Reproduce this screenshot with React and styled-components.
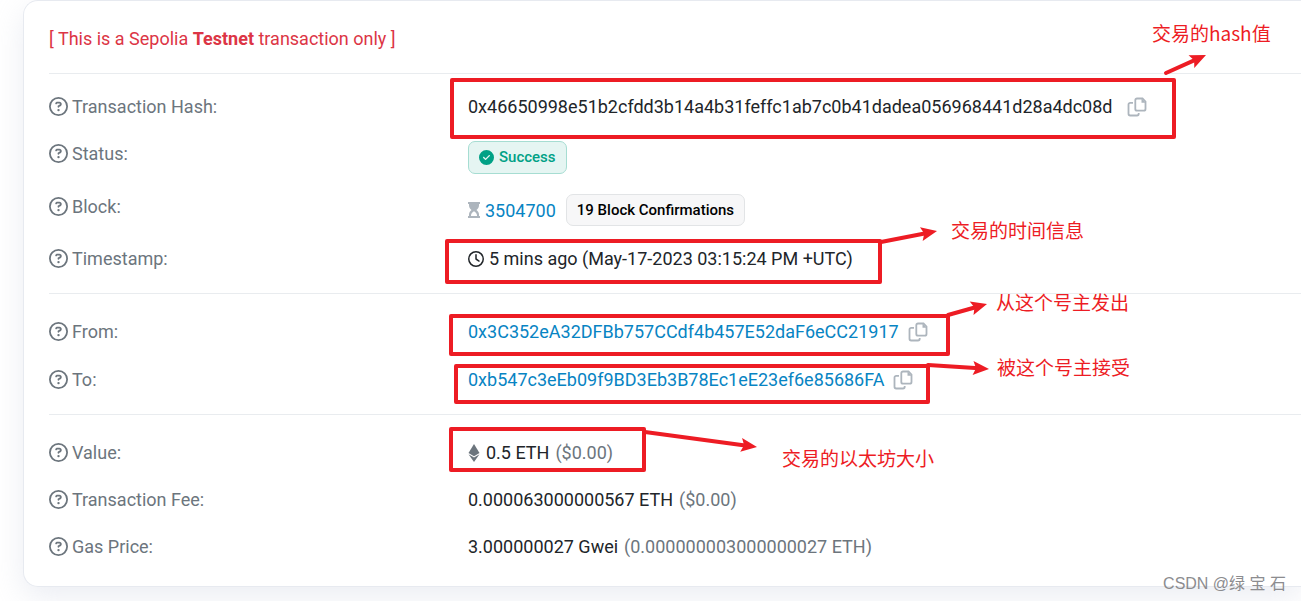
import React from 'react';
import styled, { createGlobalStyle } from 'styled-components';
import { FaRegCircleQuestion, FaRegClock, FaCircleCheck } from 'react-icons/fa6';

const GlobalStyle = createGlobalStyle`
  * {
    box-sizing: border-box;
  }

  body {
    margin: 0;
    background-color: #fff;
    color: #212529;
    font-family: Roboto, "Noto Sans CJK SC", sans-serif;
    font-size: 18px;
    line-height: 25px;
  }
`;

const Page = styled.main`
  position: relative;
  padding-left: 23px;
  padding-bottom: 14px;
  overflow: hidden;
`;

const Card = styled.section`
  padding: 25px 0 25px 25px;
  background-color: #fff;
  border: 1px solid #e7eaf0;
  border-right: 0;
  border-radius: 15px 0 0 15px;
  box-shadow: 0 10px 30px rgba(189, 197, 216, 0.3);
`;

const Notice = styled.p`
  margin: 0;
  padding-bottom: 22px;
  color: #dc3545;
`;

const Group = styled.dl`
  display: flex;
  flex-direction: column;
  gap: ${props => props.$gap || 20}px;
  margin: 0;
  padding: ${props => props.$first ? '20px' : '25px'} 0 ${props => props.$last ? '0' : '20px'};
  border-top: 1px solid #e9ecef;
`;

const Row = styled.div`
  display: grid;
  grid-template-columns: 419px minmax(0, 1fr);
  align-items: start;
  min-height: 27px;
`;

const Label = styled.dt`
  display: flex;
  align-items: center;
  gap: 4px;
  color: #6c757d;
`;

const Value = styled.dd`
  display: flex;
  align-items: center;
  gap: ${props => props.$gap || 5}px;
  margin: 0;
  white-space: nowrap;
`;

const Link = styled.a`
  color: #0784c3;
  text-decoration: none;
`;

const Muted = styled.span`
  color: #6c757d;
`;

const Badge = styled.span`
  display: inline-flex;
  align-items: center;
  gap: 5px;
  height: ${props => props.$success ? '33px' : '32px'};
  padding: 0 10px;
  margin-left: ${props => props.$success ? '0' : '5px'};
  border: 1px solid ${props => props.$success ? '#a6ddd2' : '#e2e4e6'};
  border-radius: 7px;
  background-color: ${props => props.$success ? '#e5f5f2' : '#f7f7f8'};
  color: ${props => props.$success ? '#00a186' : '#000'};
  font-size: 15px;
  font-weight: 500;
`;

const CopyButton = styled.button`
  display: flex;
  padding: 0;
  border: 0;
  background: none;
  color: #adb5bd;
  cursor: pointer;
`;

const Overlay = styled.svg`
  position: absolute;
  top: 0;
  left: 0;
  pointer-events: none;
`;

const Note = styled.span`
  position: absolute;
  top: ${props => props.$top}px;
  left: ${props => props.$left}px;
  color: #ed1c24;
  font-family: "Noto Sans CJK SC", sans-serif;
  font-size: 19px;
  white-space: nowrap;
`;

const Watermark = styled.span`
  position: absolute;
  right: 15px;
  bottom: 5px;
  color: #8c8c8f;
  font-family: "Liberation Sans", "Noto Sans CJK SC", sans-serif;
  font-size: 16px;
`;

const boxes = [
  [452, 80, 722, 57],
  [447, 241, 433, 41],
  [451, 316, 497, 38],
  [456, 366, 472, 36],
  [451, 429, 193, 41],
];

const arrows = [
  [1166, 73, 1206, 55],
  [881, 242, 937, 231],
  [948, 315, 987, 304],
  [928, 365, 989, 369],
  [645, 432, 757, 447],
];

const notes = [
  [1152, 20, '交易的hash值'],
  [951, 217, '交易的时间信息'],
  [996, 289, '从这个号主发出'],
  [997, 354, '被这个号主接受'],
  [782, 445, '交易的以太坊大小'],
];

function Field({ label, gap, children }) {
  return (
    <Row>
      <Label><FaRegCircleQuestion size={19} />{label}</Label>
      <Value $gap={gap}>{children}</Value>
    </Row>
  );
}

function Copy() {
  return (
    <CopyButton type="button" aria-label="Copy">
      <svg width="20" height="20" viewBox="0 0 20 20" fill="none" stroke="currentColor" strokeWidth="1.8">
        <path d="M10 1.500h5.500l3 3V12a1.700 1.700 0 0 1-1.700 1.700H10A1.700 1.700 0 0 1 8.300 12V3.200A1.700 1.700 0 0 1 10 1.500z" />
        <path d="M14.500 1.500v4.200h4z" fill="currentColor" stroke="none" />
        <path d="M6 5.800H3.200a1.700 1.700 0 0 0-1.700 1.700v9.300a1.700 1.700 0 0 0 1.700 1.700H10a1.700 1.700 0 0 0 1.700-1.700V16" />
      </svg>
    </CopyButton>
  );
}

function Hourglass() {
  return (
    <svg width="12" height="16" viewBox="0 0 12 16" fill="#adb5bd">
      <path fillRule="evenodd" d="M0 0h12v2h-1v1.500c0 1.800-1 3.300-2.500 4.500C10 9.200 11 10.700 11 12.500V14h1v2H0v-2h1v-1.500C1 10.700 2 9.200 3.500 8 2 6.800 1 5.300 1 3.500V2H0zM3 14h6v-.800C8.800 11.600 7.600 10.200 6 9.300 4.400 10.200 3.200 11.600 3 13.200z" />
    </svg>
  );
}

function Ether() {
  return (
    <svg width="12" height="18" viewBox="0 0 12 18" fill="#6c757d">
      <path d="M6 0l5.500 9L6 12.300.500 9z" />
      <path d="M.500 10.300L6 13.600l5.500-3.300L6 18z" />
    </svg>
  );
}

function Arrow({ from: [x1, y1], to: [x2, y2] }) {
  const length = Math.hypot(x2 - x1, y2 - y1);
  const angle = Math.atan2(y2 - y1, x2 - x1) * 180 / Math.PI;
  return (
    <g transform={`translate(${x2} ${y2}) rotate(${angle})`}>
      <path d={`M${-length} 0H-10`} stroke="#ed1c24" strokeWidth="4" strokeLinecap="round" />
      <path d="M0 0L-16 -7L-13 0L-16 7z" fill="#ed1c24" />
    </g>
  );
}

function Annotations() {
  return (
    <>
      <Overlay width="1301" height="601" fill="none">
        {boxes.map(([x, y, width, height]) => (
          <rect key={y} x={x} y={y} width={width} height={height} stroke="#ed1c24" strokeWidth="4" strokeLinejoin="round" />
        ))}
        {arrows.map(([x1, y1, x2, y2]) => (
          <Arrow key={y1} from={[x1, y1]} to={[x2, y2]} />
        ))}
      </Overlay>
      {notes.map(([left, top, text]) => (
        <Note key={text} $left={left} $top={top}>{text}</Note>
      ))}
    </>
  );
}

export default function App() {
  return (
    <Page>
      <GlobalStyle />
      <Card>
        <Notice>[ This is a Sepolia <b>Testnet</b> transaction only ]</Notice>
        <Group $first>
          <Field label="Transaction Hash:" gap={14}>
            0x46650998e51b2cfdd3b14a4b31feffc1ab7c0b41dadea056968441d28a4dc08d
            <Copy />
          </Field>
          <Field label="Status:">
            <Badge $success><FaCircleCheck size={15} />Success</Badge>
          </Field>
          <Field label="Block:">
            <Hourglass />
            <Link href="#block">3504700</Link>
            <Badge>19 Block Confirmations</Badge>
          </Field>
          <Field label="Timestamp:">
            <FaRegClock size={16} />
            5 mins ago (May-17-2023 03:15:24 PM +UTC)
          </Field>
        </Group>
        <Group $gap={21}>
          <Field label="From:" gap={9}>
            <Link href="#from">0x3C352eA32DFBb757CCdf4b457E52daF6eCC21917</Link>
            <Copy />
          </Field>
          <Field label="To:" gap={9}>
            <Link href="#to">0xb547c3eEb09f9BD3Eb3B78Ec1eE23ef6e85686FA</Link>
            <Copy />
          </Field>
        </Group>
        <Group $last>
          <Field label="Value:" gap={6}>
            <Ether />
            0.5 ETH <Muted>($0.00)</Muted>
          </Field>
          <Field label="Transaction Fee:" gap={6}>
            0.000063000000567 ETH <Muted>($0.00)</Muted>
          </Field>
          <Field label="Gas Price:" gap={6}>
            3.000000027 Gwei <Muted>(0.000000003000000027 ETH)</Muted>
          </Field>
        </Group>
      </Card>
      <Annotations />
      <Watermark>CSDN @绿 宝 石</Watermark>
    </Page>
  );
}
